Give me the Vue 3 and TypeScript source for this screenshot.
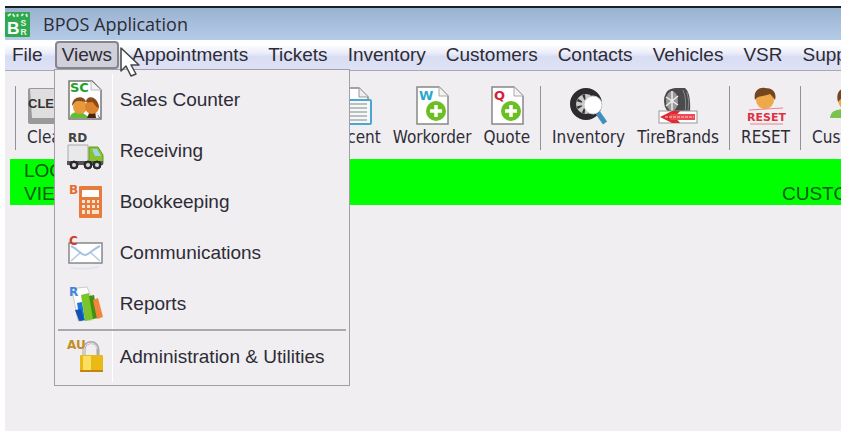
<script setup lang="ts">
interface ViewEntry {
  label: string
  icon: string
}

const menusAfter: string[] = [
  'Appointments', 'Tickets', 'Inventory', 'Customers', 'Contacts', 'Vehicles', 'VSR', 'Support',
]

const views: ViewEntry[] = [
  { label: 'Sales Counter', icon: 'sales' },
  { label: 'Receiving', icon: 'receiving' },
  { label: 'Bookkeeping', icon: 'books' },
  { label: 'Communications', icon: 'mail' },
  { label: 'Reports', icon: 'reports' },
]
</script>

<template>
  <div class="window">
    <header class="titlebar">
      <svg class="logo" viewBox="0 0 26 26" aria-hidden="true">
        <rect width="26" height="26" rx="1" fill="#2fa84f" />
        <path d="M3 4l3-2M8 2l2 3M13 2v3M17 4l2-2M22 2l1 3" stroke="#d9f3dd" stroke-width="2" />
        <text x="2" y="23" class="logo-b">B</text>
        <text x="16" y="15" class="logo-s">S</text>
        <text x="16" y="24" class="logo-s">R</text>
      </svg>
      <h1>BPOS Application</h1>
    </header>

    <nav class="menubar" aria-label="Main menu">
      <button type="button" class="menu">File</button>
      <div class="open-menu">
        <button type="button" class="menu active" aria-expanded="true">Views</button>
        <div class="popup">
          <button v-for="v in views" :key="v.label" type="button" class="entry">
            <span class="entry-icon">
              <svg v-if="v.icon === 'sales'" viewBox="0 0 38 42" aria-hidden="true">
                <path d="M3 2h23l9 9v29H3z" fill="#fff" stroke="#777" stroke-width="1.5" />
                <path d="M25 2v9h10" fill="#f3f3f3" stroke="#bbb" />
                <path d="M4 39c0-6 8-7 13-5l7 5z" fill="#62bd35" />
                <path d="M21 39l3-7h6l4 7z" fill="#4b2410" />
                <path d="M29 32l1 7h3l-2-7z" fill="#eee" />
                <circle cx="14" cy="28" r="7" fill="#e79a3d" />
                <circle cx="26" cy="28" r="7" fill="#dc842c" />
                <path d="M6 27c0-11 13-11 14-4-5-1-6-1-8-1-3 0-4 3-6 5zM20 23c0-7 12-7 13 6-4-1-5-6-7-6-2 0-4 1-6 0z" fill="#8a4a1c" />
                <text x="4" y="13" class="tag" fill="#20a127" font-size="13">SC</text>
              </svg>
              <svg v-else-if="v.icon === 'receiving'" viewBox="0 0 38 42" aria-hidden="true">
                <path d="M2 15h20v17H2z" fill="#e9e9ec" stroke="#aaa" />
                <path d="M23 17h9l5 8v9H23z" fill="#8ac42d" stroke="#659b20" />
                <path d="M26 19h5l4 7h-6z" fill="#9ed2ee" />
                <path d="M1 31h36v4H1z" fill="#555" />
                <g fill="#333" stroke="#222"><circle cx="8" cy="35" r="4" /><circle cx="22" cy="35" r="4" /><circle cx="31" cy="35" r="4" /></g>
                <g fill="#ddd"><circle cx="8" cy="35" r="2" /><circle cx="22" cy="35" r="2" /><circle cx="31" cy="35" r="2" /></g>
                <text x="2" y="12" class="tag" fill="#444" font-size="12">RD</text>
              </svg>
              <svg v-else-if="v.icon === 'books'" viewBox="0 0 38 42" aria-hidden="true">
                <rect x="13" y="5" width="23" height="32" rx="1" fill="#e67b3b" />
                <rect x="16" y="9" width="17" height="7" fill="#fff" />
                <g fill="#fbe3d0">
                  <path d="M16 19h3v3h-3zM21 19h3v3h-3zM26 19h3v3h-3zM31 19h2v3h-2zM16 24h3v3h-3zM21 24h3v3h-3zM26 24h3v3h-3zM31 24h2v3h-2zM16 29h3v4h-3zM21 29h3v4h-3zM26 29h7v4h-7z" />
                </g>
                <text x="3" y="13" class="tag" fill="#e56c31" font-size="12">B</text>
              </svg>
              <svg v-else-if="v.icon === 'mail'" viewBox="0 0 38 42" aria-hidden="true">
                <rect x="3" y="11" width="33" height="20" fill="#fff" stroke="#888" stroke-width="1.5" />
                <path d="M5 29l10-9M34 29l-10-9" stroke="#b5c9e6" stroke-width="1.5" />
                <path d="M5 14c7 3 10 9 14 9s8-6 15-9" fill="none" stroke="#a9c0e2" stroke-width="2" />
                <path d="M5 36q14 2 28-1" fill="none" stroke="#dde2ec" stroke-width="1.5" />
                <text x="3" y="13" class="tag" fill="#d5382f" font-size="12">C</text>
              </svg>
              <svg v-else viewBox="0 0 38 42" aria-hidden="true">
                <path d="M7 12l4-7 10-1 3 7 2 26-14 1z" fill="#fff" stroke="#ccc" />
                <path d="M11 20l5-1 3 18-5 1z" fill="#1675db" />
                <path d="M9 27l4 11 5-1-3-11z" fill="#1352b5" />
                <path d="M15 12l8-2 5 26-9 2z" fill="#7bc52b" />
                <path d="M23 13l5-1 4 23-5 1z" fill="#448f12" />
                <path d="M27 17l5-2 5 19-6 2z" fill="#f2853a" />
                <text x="3" y="13" class="tag" fill="#4188dd" font-size="12">R</text>
              </svg>
            </span>
            <span class="entry-label">{{ v.label }}</span>
          </button>
          <hr />
          <button type="button" class="entry">
            <span class="entry-icon">
              <svg viewBox="0 0 38 42" aria-hidden="true">
                <path d="M18 22v-8c0-10 14-10 14 0v8" fill="none" stroke="#aaa" stroke-width="3" />
                <path d="M18 20v-6c0-9 13-9 13-1" fill="none" stroke="#eee" />
                <rect x="14" y="19" width="23" height="17" rx="1" fill="#e9b915" />
                <path d="M17 20h8v15h-8z" fill="#fbdf60" />
                <path d="M14 34h23v2H14z" fill="#bf8613" />
                <text x="1" y="13" class="tag" fill="#c28c27" font-size="12">AU</text>
              </svg>
            </span>
            <span class="entry-label">Administration &amp; Utilities</span>
          </button>
        </div>
        <svg class="cursor" viewBox="0 0 20 30" aria-hidden="true">
          <path d="M1 1v23l5-5 5 10 5-2-5-9h8z" fill="#fff" stroke="#444" stroke-width="1.5" stroke-linejoin="round" />
        </svg>
      </div>
      <button v-for="m in menusAfter" :key="m" type="button" class="menu">{{ m }}</button>
    </nav>

    <div class="toolbar" role="toolbar" aria-label="Tickets">
      <div class="group first">
        <button type="button" class="tool">
          <svg viewBox="0 0 40 40" aria-hidden="true">
            <rect x="1" y="2" width="38" height="36" rx="2" fill="#999" />
            <path d="M3 3h34l-3 29H5z" fill="#dedede" />
            <text x="1" y="22" class="key">CLEAR</text>
          </svg>
          Clear
        </button>
        <button type="button" class="tool">
          <svg viewBox="0 0 40 40" aria-hidden="true">
            <path d="M5 2h20l9 9v27H5z" fill="#fff" stroke="#888" stroke-width="1.5" />
            <path d="M25 2v9h9" fill="#eee" stroke="#999" />
            <rect x="4" y="14" width="33" height="24" rx="1" fill="#f6f9fb" stroke="#4da6cf" stroke-width="2" />
            <path d="M8 18h25M8 22h25M8 26h25M8 30h25M8 34h25" stroke="#aaa" stroke-width="1.5" />
          </svg>
          Recent
        </button>
        <button type="button" class="tool">
          <svg viewBox="0 0 40 40" aria-hidden="true">
            <path d="M5 1h22l9 9v28H5z" fill="#fff" stroke="#888" stroke-width="1.5" />
            <path d="M27 1v9h9" fill="#f4f4f4" stroke="#aaa" />
            <circle cx="24" cy="25" r="10" fill="#6dbe22" />
            <path d="M24 19v12M18 25h12" stroke="#fff" stroke-width="3.5" />
            <text x="7" y="14" class="tag" fill="#29a8cc" font-size="13">W</text>
          </svg>
          Workorder
        </button>
        <button type="button" class="tool">
          <svg viewBox="0 0 40 40" aria-hidden="true">
            <path d="M5 1h22l9 9v28H5z" fill="#fff" stroke="#888" stroke-width="1.5" />
            <path d="M27 1v9h9" fill="#f4f4f4" stroke="#aaa" />
            <circle cx="24" cy="25" r="10" fill="#6dbe22" />
            <path d="M24 19v12M18 25h12" stroke="#fff" stroke-width="3.5" />
            <text x="7" y="14" class="tag" fill="#d4213a" font-size="13">Q</text>
          </svg>
          Quote
        </button>
      </div>
      <div class="group">
        <button type="button" class="tool">
          <svg viewBox="0 0 40 40" aria-hidden="true">
            <circle cx="17" cy="18" r="13" fill="#c9c9c9" stroke="#2c2c2c" stroke-width="6" />
            <circle cx="17" cy="18" r="7" fill="none" stroke="#333" stroke-width="5" stroke-dasharray="2 4" />
            <path d="M29 27l7 10" stroke="#3f8fbe" stroke-width="5" />
            <circle cx="24" cy="19" r="9" fill="#fff" stroke="#ccc" />
          </svg>
          Inventory
        </button>
        <button type="button" class="tool">
          <svg viewBox="0 0 40 40" aria-hidden="true">
            <path d="M11 5q2-3 7-3h9q6 5 5 23l-4 4H13z" fill="#4b4b4f" />
            <ellipse cx="14" cy="15" rx="7" ry="11" fill="#999" stroke="#4a4a4a" stroke-width="2" />
            <path d="M14 5v21M8 11l12 8M8 20l12-10" stroke="#eee" stroke-width="1.5" />
            <path d="M25 4q4 9 2 22M29 6q3 9 1 19" fill="none" stroke="#888" />
            <rect x="1" y="25" width="38" height="12" fill="#fff" stroke="#999" />
            <path d="M2 31l12-6h8l-5 6 5 6h-8z" fill="#e22832" />
            <path d="M12 28h25v6H12z" fill="#ea4a52" />
            <path d="M7 31h29" stroke="#fbd0d2" stroke-dasharray="3 1" />
          </svg>
          TireBrands
        </button>
      </div>
      <div class="group">
        <button type="button" class="tool">
          <svg viewBox="0 0 40 40" aria-hidden="true">
            <circle cx="19" cy="14" r="9" fill="#eda94a" />
            <path d="M9 14C7 5 13 1 19 2c8 0 12 5 10 12-2-3-4-5-5-6-7 3-12 1-15 6z" fill="#754522" />
            <path d="M3 24l34-2M4 38h33" stroke="#ed8188" />
            <text x="1" y="35" class="reset">RESET</text>
          </svg>
          RESET
        </button>
      </div>
      <div class="group">
        <button type="button" class="tool">
          <svg viewBox="0 0 40 40" aria-hidden="true">
            <path d="M1 32c1-7 5-9 19-9s18 3 19 9z" fill="#78c34c" />
            <circle cx="20" cy="14" r="11" fill="#eda94a" />
            <path d="M9 16C6 5 13 1 20 2c9 0 13 6 11 14-4-5-15-9-22 0z" fill="#754522" />
          </svg>
          Customer
        </button>
      </div>
    </div>

    <section class="status">
      <p>LOC</p>
      <p>VIEW</p>
      <p class="customer">CUSTOMER</p>
    </section>
    <main class="workspace"></main>
  </div>
</template>

<style>
body {
  background: #fff;
  overflow: hidden;
}
</style>

<style scoped>
.window {
  box-sizing: border-box;
  min-height: calc(100vh - 6px);
  margin: 6px 0 0 5px;
  display: flex;
  flex-direction: column;
  background: #f0eef1;
  color: #2d2c36;
  font-family: "Liberation Sans", sans-serif;
  overflow: hidden;
}
button {
  padding: 0;
  border: 0;
  background: none;
  color: inherit;
  font: inherit;
}
.titlebar {
  display: flex;
  align-items: center;
  gap: 13px;
  height: 32px;
  border-top: 2px solid #17202a;
  background: linear-gradient(#9ab4d0, #a6bddb 45%, #b4cbe8);
}
.logo {
  width: 25px;
  height: 25px;
}
.logo-b {
  font: bold 18px "Liberation Sans", sans-serif;
  fill: #fff;
}
.logo-s {
  font: bold 9px "Liberation Sans", sans-serif;
  fill: #e4f8e6;
}
h1 {
  margin: 0;
  font: 18px/26px "Open Sans", sans-serif;
}
.menubar {
  display: flex;
  align-items: center;
  gap: 6px;
  height: 30px;
  border-bottom: 1px solid #aaa8b0;
  background: linear-gradient(#fff 15%, #e9ebf8 45%, #d9ddf3 55%, #dfe2f5);
  font-size: 19px;
}
.menu {
  height: 28px;
  padding: 0 6px;
  border: 1px solid transparent;
  white-space: nowrap;
}
.menu.active {
  padding: 0 5px;
  border: 2px solid #85858e;
  border-radius: 4px;
  background: #cfd0da;
}
.menu:first-child {
  padding-right: 5px;
}
.open-menu {
  position: relative;
}
.popup {
  position: absolute;
  z-index: 2;
  top: 28px;
  left: -1px;
  box-sizing: border-box;
  width: 296px;
  padding: 4px 3px 3px;
  border: 1px solid #a09fa5;
  background: #f0eef1;
}
.entry {
  display: flex;
  align-items: center;
  width: 100%;
  height: 51px;
  text-align: left;
}
.entry-icon {
  display: flex;
  align-items: center;
  align-self: stretch;
  width: 46px;
  padding-left: 8px;
  border-right: 1px solid #fff;
}
.entry-icon svg {
  width: 38px;
  height: 42px;
}
.entry-label {
  padding-left: 7px;
  white-space: nowrap;
}
hr {
  height: 0;
  margin: 0;
  border: 0;
  border-top: 2px solid #a9a9ad;
}
.tag {
  font-family: "DejaVu Sans", sans-serif;
  font-weight: bold;
}
.cursor {
  position: absolute;
  z-index: 3;
  top: 6px;
  left: 65px;
  width: 20px;
  height: 30px;
}
.toolbar {
  display: flex;
  padding: 15px 0 9px 10px;
  font: 17px/20px "DejaVu Sans Condensed", "DejaVu Sans", sans-serif;
}
.group {
  display: flex;
  flex: none;
  gap: 12px;
  height: 64px;
  padding: 0 10px 0 11px;
  border-left: 1px solid #929197;
}
.first .tool:first-child {
  width: 289px;
  align-items: flex-start;
}
.tool {
  display: flex;
  flex-direction: column;
  align-items: center;
  gap: 1px;
}
.tool svg {
  width: 40px;
  height: 40px;
}
.key {
  font: bold 13px "Liberation Sans", sans-serif;
  fill: #333;
}
.reset {
  font: bold 11px "DejaVu Sans", sans-serif;
  fill: #df323f;
}
.status {
  display: grid;
  grid-template-columns: minmax(0, 1fr) 59px;
  margin-left: 5px;
  padding-left: 14px;
  background: #00ff00;
  color: #075c10;
  font-size: 19px;
  line-height: 23px;
}
.status p {
  grid-column: 1;
  margin: 0;
}
.status .customer {
  grid-column: 2;
  grid-row: 2;
}
.workspace {
  flex: 1;
}
</style>
